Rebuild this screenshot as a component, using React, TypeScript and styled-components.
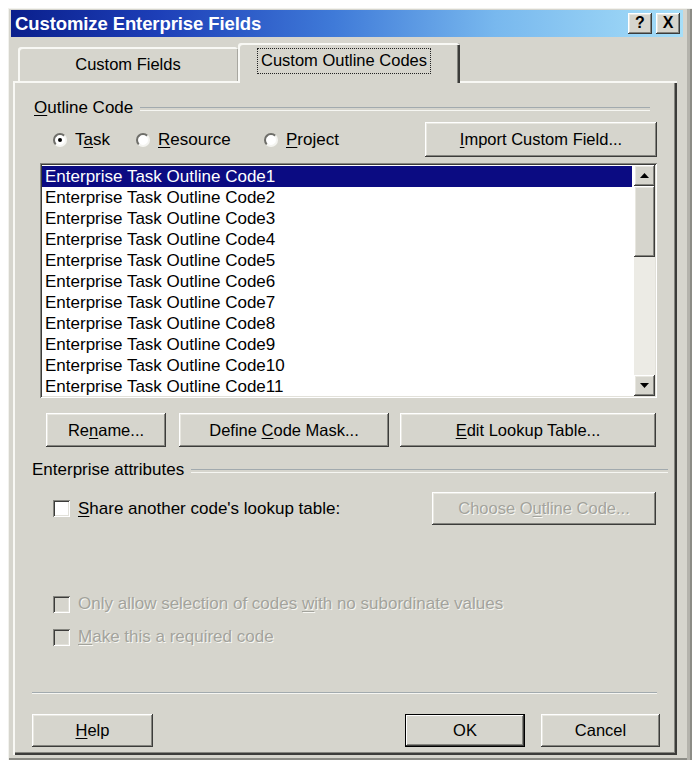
import React from "react";
import styled, { createGlobalStyle, css } from "styled-components";

const FACE = "#d6d5cd";
const FONT = `"Liberation Sans", Arial, sans-serif`;

const Global = createGlobalStyle`
  html, body { margin: 0; padding: 0; background: #ffffff; }
  body { font-family: ${FONT}; color: #000; }
  * { box-sizing: border-box; }
  u { text-decoration-thickness: 1px; text-underline-offset: 2px; }
`;

const raised = css`
  box-shadow:
    inset -1px -1px 0 #3c3c3a,
    inset 1px 1px 0 #ffffff,
    inset -2px -2px 0 #85857f,
    inset 2px 2px 0 #e8e7e0;
`;

const sunken = css`
  box-shadow:
    inset 1px 1px 0 #85857f,
    inset -1px -1px 0 #ffffff,
    inset 2px 2px 0 #3c3c3a,
    inset -2px -2px 0 #e2e1da;
`;

const Dialog = styled.div`
  margin: 8px 0 0 8px;
  width: 684px;
  height: 752px;
  background: ${FACE};
  display: flex;
  flex-direction: column;
  padding: 2px 9px 5px 3px;
  box-shadow:
    inset 1px 1px 0 #f2f2ee,
    inset -2px 0 0 #8c8c86,
    inset -5px 0 0 #b4b3ac,
    inset 0 -2px 0 #8c8c86;
`;

const TitleBar = styled.div`
  height: 27px;
  flex: none;
  display: flex;
  align-items: center;
  justify-content: space-between;
  padding: 0 3px 0 4px;
  background: linear-gradient(90deg, #0a1f8c 0%, #1d3fb8 22%, #3f7ad8 48%, #78b8ee 72%, #a6def8 100%);
`;

const TitleText = styled.span`
  color: #ffffff;
  font-weight: bold;
  font-size: 18.5px;
  letter-spacing: -0.1px;
`;

const CaptionButtons = styled.div`
  display: flex;
  gap: 4px;
`;

const CaptionButton = styled.div`
  width: 24px;
  height: 21px;
  background: ${FACE};
  ${raised};
  display: flex;
  align-items: center;
  justify-content: center;
  font-weight: bold;
  font-size: 16px;
  line-height: 1;
  padding-bottom: 1px;
`;

const TabStrip = styled.div`
  height: 44px;
  flex: none;
  display: flex;
  align-items: flex-end;
  padding-left: 7px;
`;

const Tab = styled.div<{ $active?: boolean; $w: number }>`
  position: relative;
  z-index: 1;
  width: ${(p) => p.$w}px;
  height: ${(p) => (p.$active ? 40 : 34)}px;
  margin-bottom: ${(p) => (p.$active ? -2 : 0)}px;
  background: ${FACE};
  border-radius: 3px 3px 0 0;
  font-size: 16.5px;
  display: flex;
  align-items: center;
  justify-content: center;
  padding-right: ${(p) => (p.$active ? 10 : 0)}px;
  padding-bottom: ${(p) => (p.$active ? 4 : 0)}px;
  box-shadow: ${(p) =>
    p.$active
      ? "inset 2px 2px 0 #f8f8f4, inset -2px 0 0 #3c3c3a, inset -3px 0 0 #85857f"
      : "inset 2px 2px 0 #f8f8f4, inset -1px 0 0 #a8a7a0"};
`;

const FocusLabel = styled.span`
  border: 1px dotted #222;
  padding: 2px 3px 3px 3px;
`;

const Panel = styled.div`
  margin-left: 2px;
  width: 664px;
  height: 674px;
  flex: none;
  display: flex;
  flex-direction: column;
  padding: 17px 20px 0 19px;
  box-shadow:
    inset 2px 2px 0 #f8f8f4,
    inset -2px -2px 0 #3c3c3a,
    inset -3px -3px 0 #85857f;
  font-size: 17px;
`;

const GroupHeader = styled.div<{ $lineEnd: number; $labelOffset: number; $mt?: number }>`
  height: 20px;
  display: flex;
  align-items: center;
  gap: 7px;
  margin-top: ${(p) => p.$mt ?? 0}px;
  margin-left: ${(p) => p.$labelOffset}px;
  margin-right: ${(p) => p.$lineEnd}px;
  white-space: nowrap;
  &::after {
    content: "";
    flex: 1;
    height: 2px;
    margin-top: 1px;
    border-top: 1px solid #a2aaae;
    border-bottom: 1px solid #f6f6f2;
  }
`;

const RadioRow = styled.div`
  margin-top: 4px;
  height: 35px;
  display: flex;
  align-items: center;
`;

const RadioGroup = styled.div`
  display: flex;
  align-items: center;
  margin-left: 21px;
  flex: 1;
`;

const RadioItem = styled.label<{ $w?: number }>`
  display: flex;
  align-items: center;
  gap: 8px;
  width: ${(p) => (p.$w ? `${p.$w}px` : "auto")};
`;

const RadioCircle = styled.span<{ $checked?: boolean }>`
  width: 14px;
  height: 14px;
  flex: none;
  border-radius: 50%;
  background: #ffffff;
  border: 2px solid;
  border-color: #6e6e69 #f4f4f0 #f4f4f0 #6e6e69;
  display: flex;
  align-items: center;
  justify-content: center;
  &::after {
    content: "";
    width: 4px;
    height: 4px;
    border-radius: 50%;
    background: ${(p) => (p.$checked ? "#000" : "transparent")};
  }
`;

const Button = styled.div<{ $w: number; $h?: number; $default?: boolean; $disabled?: boolean }>`
  width: ${(p) => p.$w}px;
  height: ${(p) => p.$h ?? 34}px;
  flex: none;
  background: ${FACE};
  display: flex;
  align-items: center;
  justify-content: center;
  font-size: 16.5px;
  white-space: nowrap;
  ${raised};
  ${(p) =>
    p.$default &&
    css`
      box-shadow:
        inset 0 0 0 1px #000,
        inset -2px -2px 0 #3c3c3a,
        inset 2px 2px 0 #ffffff,
        inset -3px -3px 0 #85857f;
    `}
  ${(p) =>
    p.$disabled &&
    css`
      color: #a3a39c;
      text-shadow: 1px 1px 0 #f8f8f4;
    `}
`;

const ListBox = styled.div`
  margin-top: 6px;
  margin-left: 8px;
  height: 235px;
  background: #ffffff;
  display: flex;
  padding: 2px;
  ${sunken};
`;

const Rows = styled.div`
  flex: 1;
  display: flex;
  flex-direction: column;
  padding-top: 1px;
  padding-right: 2px;
  overflow: hidden;
`;

const Row = styled.div<{ $selected?: boolean }>`
  height: 21px;
  flex: none;
  line-height: 21px;
  padding-left: 3px;
  font-size: 17px;
  white-space: nowrap;
  background: ${(p) => (p.$selected ? "#0b0b82" : "transparent")};
  color: ${(p) => (p.$selected ? "#ffffff" : "#000000")};
`;

const ScrollBar = styled.div`
  width: 21px;
  flex: none;
  display: flex;
  flex-direction: column;
  background: #ecebe5;
`;

const ScrollArrow = styled.div`
  width: 21px;
  height: 21px;
  flex: none;
  background: ${FACE};
  ${raised};
  display: flex;
  align-items: center;
  justify-content: center;
`;

const ScrollThumb = styled.div`
  width: 21px;
  height: 71px;
  flex: none;
  background: ${FACE};
  ${raised};
`;

const ScrollTrack = styled.div`
  flex: 1;
`;

const ButtonRow = styled.div<{ $mt: number; $ml?: number; $mr?: number }>`
  margin-top: ${(p) => p.$mt}px;
  margin-left: ${(p) => p.$ml ?? 0}px;
  margin-right: ${(p) => p.$mr ?? 0}px;
  display: flex;
  align-items: center;
`;

const Spacer = styled.div<{ $w?: number }>`
  ${(p) => (p.$w ? `width: ${p.$w}px; flex: none;` : "flex: 1;")}
`;

const CheckRow = styled.label<{ $mt: number; $h?: number; $disabled?: boolean }>`
  margin-top: ${(p) => p.$mt}px;
  height: ${(p) => p.$h ?? 20}px;
  margin-left: 21px;
  display: flex;
  align-items: center;
  gap: 8px;
  white-space: nowrap;
  ${(p) =>
    p.$disabled &&
    css`
      color: #a3a39c;
      text-shadow: 1px 1px 0 #f8f8f4;
    `}
`;

const CheckBox = styled.span<{ $disabled?: boolean }>`
  width: 17px;
  height: 17px;
  flex: none;
  background: ${(p) => (p.$disabled ? FACE : "#ffffff")};
  ${sunken};
`;

const Separator = styled.div`
  margin-top: 45px;
  height: 2px;
  border-top: 1px solid #a2aaae;
  border-bottom: 1px solid #f6f6f2;
`;

const UpTriangle = () => (
  <svg width="9" height="5" viewBox="0 0 9 5">
    <path d="M4.5 0 L9 5 L0 5 Z" fill="#000" />
  </svg>
);

const DownTriangle = () => (
  <svg width="9" height="5" viewBox="0 0 9 5">
    <path d="M0 0 L9 0 L4.5 5 Z" fill="#000" />
  </svg>
);

const codes = Array.from({ length: 11 }, (_, i) => `Enterprise Task Outline Code${i + 1}`);

export default function App() {
  return (
    <>
      <Global />
      <Dialog>
        <TitleBar>
          <TitleText>Customize Enterprise Fields</TitleText>
          <CaptionButtons>
            <CaptionButton>?</CaptionButton>
            <CaptionButton>X</CaptionButton>
          </CaptionButtons>
        </TitleBar>

        <TabStrip>
          <Tab $w={220}>Custom Fields</Tab>
          <Tab $w={222} $active>
            <FocusLabel>Custom Outline Codes</FocusLabel>
          </Tab>
        </TabStrip>

        <Panel>
          <GroupHeader $labelOffset={2} $lineEnd={7}>
            <span>
              <u>O</u>utline Code
            </span>
          </GroupHeader>

          <RadioRow>
            <RadioGroup>
              <RadioItem $w={83}>
                <RadioCircle $checked />
                <span>
                  T<u>a</u>sk
                </span>
              </RadioItem>
              <RadioItem $w={128}>
                <RadioCircle />
                <span>
                  <u>R</u>esource
                </span>
              </RadioItem>
              <RadioItem>
                <RadioCircle />
                <span>
                  <u>P</u>roject
                </span>
              </RadioItem>
            </RadioGroup>
            <Button $w={232} $h={35}>
              <span>
                <u>I</u>mport Custom Field...
              </span>
            </Button>
          </RadioRow>

          <ListBox>
            <Rows>
              {codes.map((c, i) => (
                <Row key={c} $selected={i === 0}>
                  {c}
                </Row>
              ))}
            </Rows>
            <ScrollBar>
              <ScrollArrow>
                <UpTriangle />
              </ScrollArrow>
              <ScrollThumb />
              <ScrollTrack />
              <ScrollArrow>
                <DownTriangle />
              </ScrollArrow>
            </ScrollBar>
          </ListBox>

          <ButtonRow $mt={15} $ml={14} $mr={1}>
            <Button $w={120}>
              <span>
                Re<u>n</u>ame...
              </span>
            </Button>
            <Spacer $w={13} />
            <Button $w={210}>
              <span>
                Define <u>C</u>ode Mask...
              </span>
            </Button>
            <Spacer $w={11} />
            <Button $w={256}>
              <span>
                <u>E</u>dit Lookup Table...
              </span>
            </Button>
          </ButtonRow>

          <GroupHeader $labelOffset={0} $lineEnd={-11} $mt={13}>
            <span>Enterprise attributes</span>
          </GroupHeader>

          <ButtonRow $mt={12} $mr={1}>
            <CheckRow $mt={0} $h={33}>
              <CheckBox />
              <span>
                <u>S</u>hare another code's lookup table:
              </span>
            </CheckRow>
            <Spacer />
            <Button $w={224} $h={33} $disabled>
              <span>
                Choose O<u>u</u>tline Code...
              </span>
            </Button>
          </ButtonRow>

          <CheckRow $mt={69} $disabled>
            <CheckBox $disabled />
            <span>
              Only allow selection of codes <u>w</u>ith no subordinate values
            </span>
          </CheckRow>

          <CheckRow $mt={13} $disabled>
            <CheckBox $disabled />
            <span>
              <u>M</u>ake this a required code
            </span>
          </CheckRow>

          <Separator />

          <ButtonRow $mt={20} $mr={-3}>
            <Button $w={121} $h={33}>
              <span>
                <u>H</u>elp
              </span>
            </Button>
            <Spacer />
            <Button $w={120} $h={33} $default>
              OK
            </Button>
            <Spacer $w={16} />
            <Button $w={119} $h={33}>
              Cancel
            </Button>
          </ButtonRow>
        </Panel>
      </Dialog>
    </>
  );
}
